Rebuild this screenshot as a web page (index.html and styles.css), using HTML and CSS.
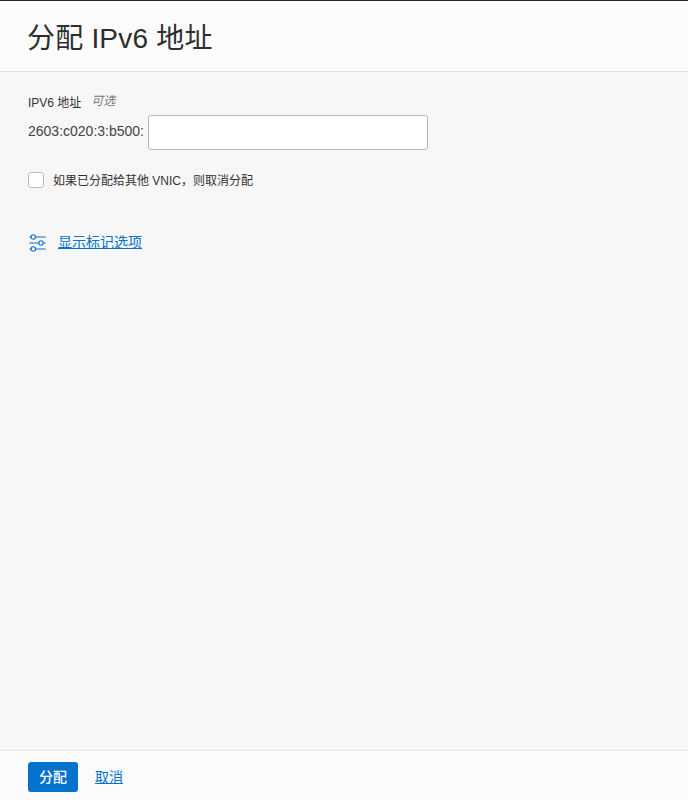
FILE: index.html
```html
<!doctype html>
<html lang="zh-CN">
  <head>
    <meta charset="UTF-8" />
    <title>分配 IPv6 地址</title>
    <link rel="stylesheet" href="styles.css">
  </head>
  <body>
    <div class="panel">
      <header class="panel-header">
        <h1>分配 IPv6 地址</h1>
      </header>

      <main class="panel-body">
        <div class="field-label">
          <label for="ipv6">IPV6 地址</label>
          <span class="optional">可选</span>
        </div>
        <div class="address-row">
          <span class="prefix">2603:c020:3:b500:</span>
          <input type="text" id="ipv6" />
        </div>

        <label class="check-row">
          <input type="checkbox" />
          <span>如果已分配给其他 VNIC，则取消分配</span>
        </label>

        <div class="tag-row">
          <svg class="tag-icon" width="18" height="22" viewBox="0 0 18 22" fill="none" stroke="#0572ce" stroke-width="1.1">
            <path d="M1.300 7h1.800M7.600 7h10.100M1.300 13h9.500M15.300 13h2.400M1.300 19h1.800M7.600 19h10.100" />
            <circle cx="5.300" cy="7" r="2.200" />
            <circle cx="13" cy="13" r="2.200" />
            <circle cx="5.300" cy="19" r="2.200" />
          </svg>
          <a href="#" class="link">显示标记选项</a>
        </div>
      </main>

      <footer class="panel-footer">
        <button type="button" class="primary">分配</button>
        <a href="#" class="link">取消</a>
      </footer>
    </div>
  </body>
</html>
```

FILE: styles.css
```css
* {
  box-sizing: border-box;
}

html,
body {
  height: 100%;
}

body {
  margin: 0;
  font-family: "Liberation Sans", "Noto Sans CJK SC", sans-serif;
  color: #333;
  background: #f7f7f7;
}

.panel {
  display: flex;
  flex-direction: column;
  height: 800px;
  border-top: 1px solid #1b2b3a;
}

.panel-header {
  height: 71px;
  padding: 0 27px;
  display: flex;
  align-items: center;
  background: #fcfcfc;
  border-bottom: 1px solid #e3e3e3;
}

h1 {
  margin: 0;
  font-size: 28px;
  font-weight: 400;
  letter-spacing: 0.2px;
  color: #2e2e2e;
}

.panel-body {
  flex: 1;
  padding: 22px 28px 0;
}

.field-label {
  display: flex;
  align-items: flex-start;
  gap: 10px;
  height: 21px;
  font-size: 12px;
  line-height: 18px;
}

.optional {
  font-style: italic;
  color: #777;
  line-height: 14px;
}

.address-row {
  display: flex;
  align-items: center;
  gap: 4px;
  font-size: 14px;
  color: #444;
}

.prefix {
  margin-bottom: 3px;
}

.address-row input {
  width: 280px;
  height: 35px;
  background: #fff;
  border: 1px solid #b4b7bd;
  border-radius: 3px;
}

.check-row {
  display: flex;
  align-items: center;
  gap: 9px;
  margin-top: 21px;
  font-size: 12px;
}

.check-row input {
  appearance: none;
  width: 16px;
  height: 16px;
  margin: 0;
  background: #fff;
  border: 1px solid #b9bcc2;
  border-radius: 3px;
}

.tag-row {
  display: flex;
  align-items: center;
  gap: 12px;
  margin-top: 42px;
  font-size: 14px;
}

.tag-icon {
  display: block;
}

.link {
  color: #0572ce;
  text-decoration: underline;
}

.panel-footer {
  height: 50px;
  padding: 0 28px;
  display: flex;
  align-items: center;
  gap: 17px;
  background: #fcfcfc;
  border-top: 1px solid #e3e3e3;
  font-size: 14px;
}

.primary {
  width: 50px;
  height: 30px;
  margin-top: 2px;
  padding: 0 0 2px;
  font: inherit;
  font-weight: 500;
  color: #fff;
  background: #0572ce;
  border: none;
  border-radius: 3px;
}
```
